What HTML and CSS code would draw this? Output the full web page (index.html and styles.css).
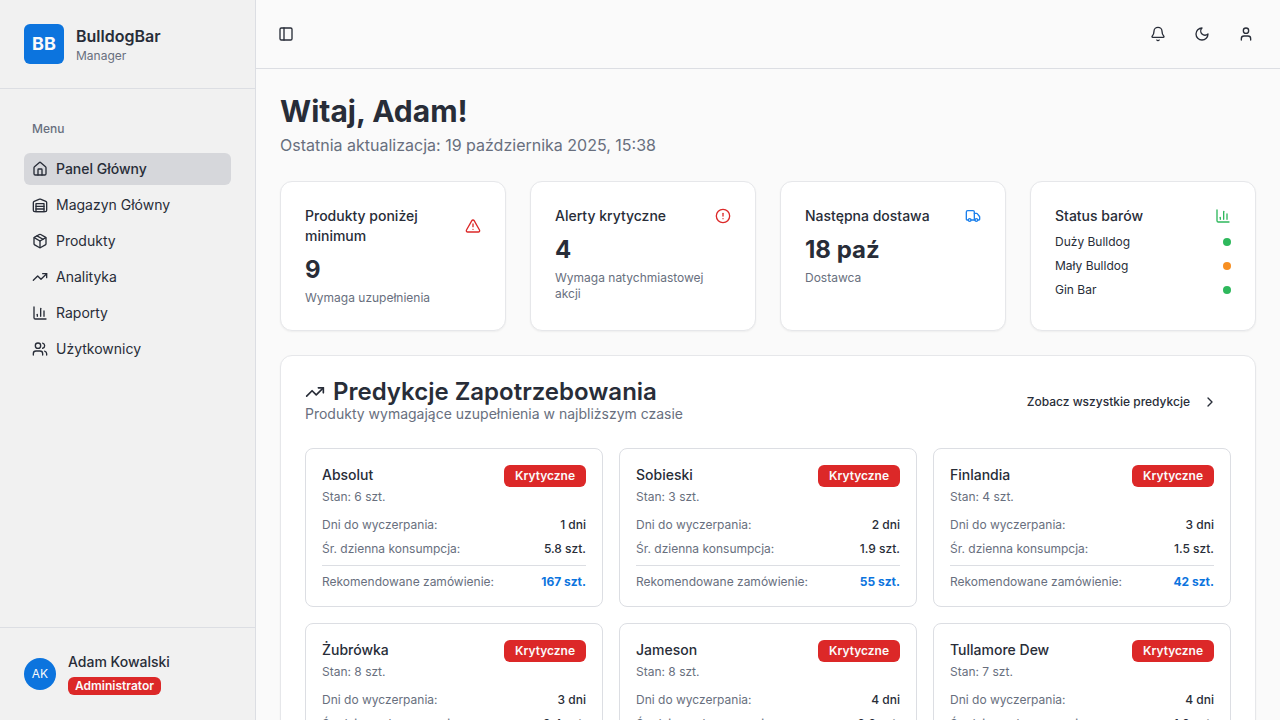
FILE: index.html
```html
<!DOCTYPE html>
<html lang="pl">
<head>
<meta charset="utf-8">
<meta name="viewport" content="width=device-width, initial-scale=1">
<title>BulldogBar Manager</title>
<link rel="stylesheet" href="styles.css">
</head>
<body>
<svg class="sprite" aria-hidden="true">
  <symbol id="i-panel" viewBox="0 0 24 24"><rect width="18" height="18" x="3" y="3" rx="2"/><path d="M9 3v18"/></symbol>
  <symbol id="i-bell" viewBox="0 0 24 24"><path d="M10.268 21a2 2 0 0 0 3.464 0"/><path d="M3.262 15.326A1 1 0 0 0 4 17h16a1 1 0 0 0 .74-1.673C19.41 13.956 18 12.499 18 8A6 6 0 0 0 6 8c0 4.499-1.411 5.956-2.738 7.326"/></symbol>
  <symbol id="i-moon" viewBox="0 0 24 24"><path d="M12 3a6 6 0 0 0 9 9 9 9 0 1 1-9-9Z"/></symbol>
  <symbol id="i-user" viewBox="0 0 24 24"><path d="M19 21v-2a4 4 0 0 0-4-4H9a4 4 0 0 0-4 4v2"/><circle cx="12" cy="7" r="4"/></symbol>
  <symbol id="i-house" viewBox="0 0 24 24"><path d="M15 21v-8a1 1 0 0 0-1-1h-4a1 1 0 0 0-1 1v8"/><path d="M3 10a2 2 0 0 1 .709-1.528l7-5.999a2 2 0 0 1 2.582 0l7 5.999A2 2 0 0 1 21 10v9a2 2 0 0 1-2 2H5a2 2 0 0 1-2-2z"/></symbol>
  <symbol id="i-warehouse" viewBox="0 0 24 24"><path d="M22 8.35V20a2 2 0 0 1-2 2H4a2 2 0 0 1-2-2V8.35A2 2 0 0 1 3.26 6.5l8-3.2a2 2 0 0 1 1.48 0l8 3.2A2 2 0 0 1 22 8.35Z"/><path d="M6 18h12"/><path d="M6 14h12"/><rect width="12" height="12" x="6" y="10"/></symbol>
  <symbol id="i-package" viewBox="0 0 24 24"><path d="M11 21.73a2 2 0 0 0 2 0l7-4A2 2 0 0 0 21 16V8a2 2 0 0 0-1-1.73l-7-4a2 2 0 0 0-2 0l-7 4A2 2 0 0 0 3 8v8a2 2 0 0 0 1 1.73z"/><path d="M12 22V12"/><path d="M3.29 7 12 12l8.71-5"/><path d="m7.5 4.27 9 5.15"/></symbol>
  <symbol id="i-trend" viewBox="0 0 24 24"><path d="m22 7-8.5 8.5-5-5L2 17"/><path d="M16 7h6v6"/></symbol>
  <symbol id="i-chart" viewBox="0 0 24 24"><path d="M3 3v16a2 2 0 0 0 2 2h16"/><path d="M18 17V9"/><path d="M13 17V5"/><path d="M8 17v-3"/></symbol>
  <symbol id="i-users" viewBox="0 0 24 24"><path d="M16 21v-2a4 4 0 0 0-4-4H6a4 4 0 0 0-4 4v2"/><circle cx="9" cy="7" r="4"/><path d="M22 21v-2a4 4 0 0 0-3-3.87"/><path d="M16 3.13a4 4 0 0 1 0 7.75"/></symbol>
  <symbol id="i-triangle" viewBox="0 0 24 24"><path d="m21.73 18-8-14a2 2 0 0 0-3.48 0l-8 14A2 2 0 0 0 4 21h16a2 2 0 0 0 1.73-3"/><path d="M12 9v4"/><path d="M12 17h.01"/></symbol>
  <symbol id="i-alert" viewBox="0 0 24 24"><circle cx="12" cy="12" r="10"/><path d="M12 8v4"/><path d="M12 16h.01"/></symbol>
  <symbol id="i-truck" viewBox="0 0 24 24"><path d="M14 18V6a2 2 0 0 0-2-2H4a2 2 0 0 0-2 2v11a1 1 0 0 0 1 1h2"/><path d="M15 18H9"/><path d="M19 18h2a1 1 0 0 0 1-1v-3.65a1 1 0 0 0-.22-.624l-3.48-4.35A1 1 0 0 0 17.52 8H14"/><circle cx="17" cy="18" r="2"/><circle cx="7" cy="18" r="2"/></symbol>
  <symbol id="i-chevron" viewBox="0 0 24 24"><path d="m9 18 6-6-6-6"/></symbol>
</svg>

<div class="app">
  <aside class="sidebar">
    <div class="brand">
      <div class="brand-mark">BB</div>
      <div>
        <div class="brand-name">BulldogBar</div>
        <div class="brand-role">Manager</div>
      </div>
    </div>
    <nav class="menu" aria-label="Menu">
      <div class="menu-title">Menu</div>
      <a class="menu-item active" href="#panel" aria-current="page"><svg class="icon"><use href="#i-house"/></svg>Panel Główny</a>
      <a class="menu-item" href="#magazyn"><svg class="icon"><use href="#i-warehouse"/></svg>Magazyn Główny</a>
      <a class="menu-item" href="#produkty"><svg class="icon"><use href="#i-package"/></svg>Produkty</a>
      <a class="menu-item" href="#analityka"><svg class="icon"><use href="#i-trend"/></svg>Analityka</a>
      <a class="menu-item" href="#raporty"><svg class="icon"><use href="#i-chart"/></svg>Raporty</a>
      <a class="menu-item" href="#uzytkownicy"><svg class="icon"><use href="#i-users"/></svg>Użytkownicy</a>
    </nav>
    <div class="account">
      <div class="avatar">AK</div>
      <div class="account-info">
        <div class="account-name">Adam Kowalski</div>
        <span class="badge badge-small">Administrator</span>
      </div>
    </div>
  </aside>

  <div class="content">
    <header class="topbar">
      <button class="icon-button toggle" type="button" aria-label="Przełącz panel boczny"><svg class="icon"><use href="#i-panel"/></svg></button>
      <div class="actions">
        <button class="icon-button" type="button" aria-label="Powiadomienia"><svg class="icon"><use href="#i-bell"/></svg></button>
        <button class="icon-button" type="button" aria-label="Tryb ciemny"><svg class="icon"><use href="#i-moon"/></svg></button>
        <button class="icon-button" type="button" aria-label="Profil"><svg class="icon"><use href="#i-user"/></svg></button>
      </div>
    </header>

    <main class="main">
      <div>
        <h1 class="title">Witaj, Adam!</h1>
        <p class="updated">Ostatnia aktualizacja: 19 października 2025, 15:38</p>
      </div>

      <section class="stats">
        <article class="card stat">
          <div class="stat-head"><h2 class="stat-title">Produkty poniżej minimum</h2><svg class="icon red"><use href="#i-triangle"/></svg></div>
          <div class="stat-value">9</div>
          <p class="stat-note">Wymaga uzupełnienia</p>
        </article>
        <article class="card stat">
          <div class="stat-head"><h2 class="stat-title">Alerty krytyczne</h2><svg class="icon red"><use href="#i-alert"/></svg></div>
          <div class="stat-value">4</div>
          <p class="stat-note">Wymaga natychmiastowej akcji</p>
        </article>
        <article class="card stat">
          <div class="stat-head"><h2 class="stat-title">Następna dostawa</h2><svg class="icon blue"><use href="#i-truck"/></svg></div>
          <div class="stat-value">18 paź</div>
          <p class="stat-note">Dostawca</p>
        </article>
        <article class="card stat">
          <div class="stat-head"><h2 class="stat-title">Status barów</h2><svg class="icon green"><use href="#i-chart"/></svg></div>
          <ul class="bars">
            <li>Duży Bulldog<span class="dot"></span></li>
            <li>Mały Bulldog<span class="dot dot-warn"></span></li>
            <li>Gin Bar<span class="dot"></span></li>
          </ul>
        </article>
      </section>

      <section class="card forecasts">
        <div class="forecasts-head">
          <div>
            <h2 class="forecasts-title"><svg class="icon icon-large"><use href="#i-trend"/></svg>Predykcje Zapotrzebowania</h2>
            <p class="forecasts-note">Produkty wymagające uzupełnienia w najbliższym czasie</p>
          </div>
          <a class="see-all" href="#predykcje">Zobacz wszystkie predykcje<svg class="icon"><use href="#i-chevron"/></svg></a>
        </div>
        <div class="products">
          <article class="product">
            <div class="product-head"><div><h3 class="product-name">Absolut</h3><p class="stock">Stan: 6 szt.</p></div><span class="badge">Krytyczne</span></div>
            <dl class="facts">
              <div><dt>Dni do wyczerpania:</dt><dd>1 dni</dd></div>
              <div><dt>Śr. dzienna konsumpcja:</dt><dd>5.8 szt.</dd></div>
              <div class="order"><dt>Rekomendowane zamówienie:</dt><dd>167 szt.</dd></div>
            </dl>
          </article>
          <article class="product">
            <div class="product-head"><div><h3 class="product-name">Sobieski</h3><p class="stock">Stan: 3 szt.</p></div><span class="badge">Krytyczne</span></div>
            <dl class="facts">
              <div><dt>Dni do wyczerpania:</dt><dd>2 dni</dd></div>
              <div><dt>Śr. dzienna konsumpcja:</dt><dd>1.9 szt.</dd></div>
              <div class="order"><dt>Rekomendowane zamówienie:</dt><dd>55 szt.</dd></div>
            </dl>
          </article>
          <article class="product">
            <div class="product-head"><div><h3 class="product-name">Finlandia</h3><p class="stock">Stan: 4 szt.</p></div><span class="badge">Krytyczne</span></div>
            <dl class="facts">
              <div><dt>Dni do wyczerpania:</dt><dd>3 dni</dd></div>
              <div><dt>Śr. dzienna konsumpcja:</dt><dd>1.5 szt.</dd></div>
              <div class="order"><dt>Rekomendowane zamówienie:</dt><dd>42 szt.</dd></div>
            </dl>
          </article>
          <article class="product">
            <div class="product-head"><div><h3 class="product-name">Żubrówka</h3><p class="stock">Stan: 8 szt.</p></div><span class="badge">Krytyczne</span></div>
            <dl class="facts">
              <div><dt>Dni do wyczerpania:</dt><dd>3 dni</dd></div>
              <div><dt>Śr. dzienna konsumpcja:</dt><dd>2.4 szt.</dd></div>
            </dl>
          </article>
          <article class="product">
            <div class="product-head"><div><h3 class="product-name">Jameson</h3><p class="stock">Stan: 8 szt.</p></div><span class="badge">Krytyczne</span></div>
            <dl class="facts">
              <div><dt>Dni do wyczerpania:</dt><dd>4 dni</dd></div>
              <div><dt>Śr. dzienna konsumpcja:</dt><dd>2.2 szt.</dd></div>
            </dl>
          </article>
          <article class="product">
            <div class="product-head"><div><h3 class="product-name">Tullamore Dew</h3><p class="stock">Stan: 7 szt.</p></div><span class="badge">Krytyczne</span></div>
            <dl class="facts">
              <div><dt>Dni do wyczerpania:</dt><dd>4 dni</dd></div>
              <div><dt>Śr. dzienna konsumpcja:</dt><dd>1.9 szt.</dd></div>
            </dl>
          </article>
        </div>
      </section>
    </main>
  </div>
</div>
</body>
</html>
```

FILE: styles.css
```css
:root {
  --ink: #282d38;
  --muted: #686f7e;
  --line: #dcdee3;
  --blue: #0c74de;
  --red: #dc2828;
  --green: #2eb85c;
  --orange: #f78f22;
}

* { box-sizing: border-box; }

h1, h2, h3, p, ul, dl, dd { margin: 0; padding: 0; }

body {
  margin: 0;
  height: 100vh;
  overflow: hidden;
  background: #fafafa;
  color: var(--ink);
  font-family: Inter, "Liberation Sans", sans-serif;
  font-size: 14px;
  line-height: 20px;
}

a { color: inherit; text-decoration: none; }

.sprite { display: none; }

.icon {
  flex: none;
  display: block;
  width: 16px;
  height: 16px;
  fill: none;
  stroke: currentColor;
  stroke-width: 2;
  stroke-linecap: round;
  stroke-linejoin: round;
}
.icon-large { width: 20px; height: 20px; }
.red { color: var(--red); }
.blue { color: #1c80ec; }
.green { color: var(--green); }

.app { display: flex; height: 100%; }

.sidebar {
  flex: none;
  width: 256px;
  display: flex;
  flex-direction: column;
  background: #f1f1f1;
  border-right: 1px solid var(--line);
}

.brand {
  display: flex;
  align-items: center;
  gap: 12px;
  padding: 24px;
  border-bottom: 1px solid var(--line);
}
.brand-mark {
  display: grid;
  place-items: center;
  width: 40px;
  height: 40px;
  border-radius: 6px;
  background: var(--blue);
  color: #fafafa;
  font-size: 18px;
  font-weight: 700;
}
.brand-name { font-size: 16px; line-height: 24px; font-weight: 600; }
.brand-role { font-size: 12px; line-height: 16px; color: var(--muted); }

.menu {
  flex: 1;
  display: flex;
  flex-direction: column;
  gap: 4px;
  padding: 24px;
}
.menu-title {
  padding: 8px;
  margin-bottom: 4px;
  font-size: 12px;
  line-height: 16px;
  font-weight: 500;
  color: var(--muted);
}
.menu-item {
  display: flex;
  align-items: center;
  gap: 8px;
  height: 32px;
  padding: 0 8px;
  border-radius: 6px;
}
.menu-item.active { background: #d6d7db; font-weight: 500; }

.account {
  display: flex;
  align-items: center;
  gap: 12px;
  padding: 24px;
  border-top: 1px solid var(--line);
}
.avatar {
  display: grid;
  place-items: center;
  width: 32px;
  height: 32px;
  border-radius: 50%;
  background: var(--blue);
  color: #fafafa;
  font-size: 12px;
}
.account-info {
  display: flex;
  flex-direction: column;
  align-items: flex-start;
  gap: 5px;
  min-height: 44px;
}
.account-name { font-weight: 500; }

.badge {
  flex: none;
  padding: 3px 11px;
  border-radius: 6px;
  background: var(--red);
  color: #fafafa;
  font-size: 12px;
  line-height: 16px;
  font-weight: 600;
}
.badge-small { padding: 1px 7px; }

.content { flex: 1; min-width: 0; display: flex; flex-direction: column; }

.topbar {
  flex: none;
  display: flex;
  align-items: center;
  justify-content: space-between;
  padding: 16px;
  border-bottom: 1px solid var(--line);
}
.actions { display: flex; gap: 8px; }
.icon-button {
  display: grid;
  place-items: center;
  width: 36px;
  height: 36px;
  padding: 0;
  border: 0;
  border-radius: 6px;
  background: none;
  color: inherit;
}
.toggle { width: 28px; height: 28px; }

.main {
  flex: 1;
  min-height: 0;
  overflow-y: auto;
  scrollbar-width: none;
  display: flex;
  flex-direction: column;
  gap: 24px;
  padding: 24px;
}
.main > * { flex: none; }
.title { font-size: 30px; line-height: 36px; font-weight: 700; }
.updated { margin-top: 4px; font-size: 16px; line-height: 24px; color: var(--muted); }

.card {
  background: #fff;
  border: 1px solid #e6e7ea;
  border-radius: 12px;
  box-shadow: 0 1px 2px rgb(0 0 0 / 5%);
  padding: 24px;
}

.stats { display: grid; grid-template-columns: repeat(4, 1fr); gap: 24px; }
.stat-head { display: flex; align-items: center; justify-content: space-between; gap: 8px; }
.stat-title { font-size: 14px; line-height: 20px; font-weight: 500; }
.stat-value { margin-top: 8px; font-size: 24px; line-height: 32px; font-weight: 700; }
.stat-note { margin-top: 4px; font-size: 12px; line-height: 16px; color: var(--muted); }

.bars {
  display: flex;
  flex-direction: column;
  gap: 8px;
  margin-top: 8px;
  list-style: none;
  font-size: 12px;
  line-height: 16px;
}
.bars li { display: flex; align-items: center; justify-content: space-between; }
.dot { width: 8px; height: 8px; border-radius: 50%; background: var(--green); }
.dot-warn { background: var(--orange); }

.forecasts-head {
  display: flex;
  align-items: center;
  justify-content: space-between;
  margin-bottom: 24px;
}
.forecasts-title {
  display: flex;
  align-items: center;
  gap: 8px;
  font-size: 24px;
  line-height: 24px;
  font-weight: 600;
}
.forecasts-note { color: var(--muted); }
.see-all {
  display: flex;
  align-items: center;
  gap: 12px;
  padding: 8px 13px;
  font-size: 12px;
  line-height: 16px;
  font-weight: 500;
}

.products { display: grid; grid-template-columns: repeat(3, 1fr); gap: 16px; }
.product { padding: 16px; border: 1px solid var(--line); border-radius: 8px; }
.product-head { display: flex; align-items: flex-start; justify-content: space-between; margin-bottom: 12px; }
.product-name { font-size: 14px; line-height: 20px; font-weight: 500; }
.stock { margin-top: 4px; font-size: 12px; line-height: 16px; color: var(--muted); }
.facts { display: flex; flex-direction: column; gap: 8px; font-size: 12px; line-height: 16px; }
.facts div { display: flex; justify-content: space-between; }
.facts dt { color: var(--muted); }
.facts dd { font-weight: 500; }
.facts .order { padding-top: 8px; border-top: 1px solid var(--line); }
.facts .order dd { color: var(--blue); font-weight: 700; }
```
